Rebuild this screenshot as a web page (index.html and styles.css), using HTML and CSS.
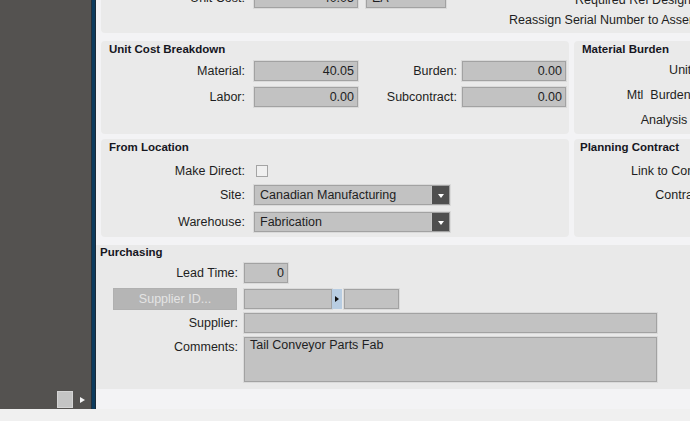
FILE: index.html
```html
<!DOCTYPE html>
<html>
<head>
<meta charset="utf-8">
<link rel="stylesheet" href="styles.css">
</head>
<body>
<div class="app">
  <aside class="sidebar">
    <div class="side-tools">
      <span class="side-box"></span>
      <span class="side-arrow"></span>
    </div>
  </aside>
  <div class="divider"></div>
  <main class="main">
    <section class="panel top-panel">
      <div class="row">
        <span class="lbl w-top">Unit Cost:</span>
        <div class="input num w104">40.05</div>
        <div class="input w80 ea">EA</div>
      </div>
      <div class="flags">
        <div class="flag flag-1">Required Ref Designators</div>
        <div class="flag">Reassign Serial Number to Assembly</div>
      </div>
    </section>

    <div class="grid">
      <section class="panel ucb">
        <h3 class="title">Unit Cost Breakdown</h3>
        <div class="row r1">
          <span class="lbl w144">Material:</span>
          <div class="input num w104">40.05</div>
          <span class="lbl w99">Burden:</span>
          <div class="input num w104">0.00</div>
        </div>
        <div class="row r2">
          <span class="lbl w144">Labor:</span>
          <div class="input num w104">0.00</div>
          <span class="lbl w99">Subcontract:</span>
          <div class="input num w104">0.00</div>
        </div>
      </section>

      <section class="panel mb">
        <h3 class="title">Material Burden</h3>
        <div class="side-labels">
          <div class="slbl">Unit Cost:</div>
          <div class="slbl">Mtl&nbsp; Burden Rate:</div>
          <div class="slbl">Analysis Code:</div>
        </div>
      </section>

      <section class="panel fl">
        <h3 class="title">From Location</h3>
        <div class="row fr1">
          <span class="lbl w144">Make Direct:</span>
          <span class="check"></span>
        </div>
        <div class="row fr2">
          <span class="lbl w144">Site:</span>
          <div class="combo"><span class="combo-text">Canadian Manufacturing</span><span class="combo-btn"><i class="tri-down"></i></span></div>
        </div>
        <div class="row fr3">
          <span class="lbl w144">Warehouse:</span>
          <div class="combo"><span class="combo-text">Fabrication</span><span class="combo-btn"><i class="tri-down"></i></span></div>
        </div>
      </section>

      <section class="panel pc">
        <h3 class="title">Planning Contract</h3>
        <div class="pc-labels">
          <div class="slbl">Link to Contract:</div>
          <div class="slbl">Contract ID:</div>
        </div>
      </section>
    </div>

    <section class="purchasing">
      <h3 class="title">Purchasing</h3>
      <div class="row pr1">
        <span class="lbl w142">Lead Time:</span>
        <div class="input num w44">0</div>
      </div>
      <div class="row pr2">
        <div class="btn-cell"><button class="btn-disabled">Supplier ID...</button></div>
        <div class="input w88"></div>
        <span class="blue-btn"><i class="tri-right"></i></span>
        <div class="input w55"></div>
      </div>
      <div class="row pr3">
        <span class="lbl w142">Supplier:</span>
        <div class="input w413"></div>
      </div>
      <div class="row pr4">
        <span class="lbl w142 top">Comments:</span>
        <div class="input w413 memo">Tail Conveyor Parts Fab</div>
      </div>
    </section>
  </main>
</div>
<div class="statusbar"></div>
</body>
</html>
```
FILE: styles.css
```css
* { box-sizing: border-box; }
html, body {
  margin: 0;
  padding: 0;
}
body {
  width: 690px;
  height: 421px;
  overflow: hidden;
  background: #f0f0f0;
  font-family: "Liberation Sans", Arial, sans-serif;
  font-size: 12.5px;
  color: #1e1e22;
}
.app {
  display: flex;
  height: 409px;
}
.sidebar {
  width: 91px;
  flex: none;
  background: #545250;
  display: flex;
  flex-direction: column;
  justify-content: flex-end;
}
.side-tools {
  display: flex;
  align-items: center;
  justify-content: flex-end;
  padding: 0 6px 1px 0;
  gap: 7px;
}
.side-box {
  width: 16px;
  height: 17px;
  background: #c4c4c4;
  border: 1px solid #d4d4d4;
}
.side-arrow {
  width: 0;
  height: 0;
  border-top: 3.5px solid transparent;
  border-bottom: 3.5px solid transparent;
  border-left: 5px solid #f4f4f4;
}
.divider {
  width: 5px;
  flex: none;
  background: #0c3b5e;
  border-left: 1px solid #23303c;
  border-right: 1px solid #1a2a38;
}
.main {
  flex: 1;
  background: #f3f3f5;
  overflow: hidden;
  display: flex;
  flex-direction: column;
}
.panel {
  background: #eaeaea;
  border-radius: 4px;
}
.title {
  margin: 0;
  padding-top: 1px;
  font-size: 11.5px;
  font-weight: bold;
  line-height: 14px;
  color: #16161e;
}
.row {
  display: flex;
  align-items: center;
}
.lbl {
  text-align: right;
  white-space: nowrap;
  flex: none;
}
.w144 { width: 144px; margin-right: 9px; }
.w99 { width: 99px; margin-right: 5px; }
.w142 { width: 142px; margin-right: 6px; }
.w-top { width: 144px; margin-right: 9px; }
.input {
  height: 20px;
  background: #c2c2c2;
  border: 1px solid #a2a2a2;
  box-shadow: 0 0 0 1px #dadada;
  padding: 0 5px;
  line-height: 18px;
  white-space: nowrap;
  flex: none;
  color: #1e1e22;
}
.num { text-align: right; padding-right: 3px; }
.w104 { width: 104px; }
.w80 { width: 80px; }
.w44 { width: 44px; }
.w88 { width: 88px; }
.w55 { width: 55px; }
.w413 { width: 413px; }

/* top panel */
.top-panel {
  margin: -14px 0 8px 5px;
  height: 47px;
  width: 700px;
  display: flex;
  align-items: flex-start;
  padding-top: 2px;
}
.top-panel .row { flex: none; }
.ea { margin-left: 8px; text-align: left; }
.flags {
  margin: 2px 0 0 63px;
  white-space: nowrap;
}
.flag { line-height: 20px; }
.flag-1 { padding-left: 66px; }

/* grid of panels */
.grid {
  display: grid;
  grid-template-columns: 468px 220px;
  grid-template-rows: 93px 98px;
  gap: 5px;
  padding-left: 5px;
}
.ucb .title, .fl .title { padding-left: 8px; }
.ucb .r1 { margin-top: 5px; }
.ucb .r2 { margin-top: 6px; }
.mb .title { padding-left: 8px; }
.side-labels { margin-top: 2px; width: 150px; }
.slbl {
  text-align: right;
  white-space: nowrap;
  line-height: 25px;
}
.pc .title { padding-left: 6px; }
.pc-labels { margin-top: 5px; width: 148px; }
.pc-labels .slbl { line-height: 24px; }

.fr1 { margin-top: 6px; height: 21px; }
.fr2 { margin-top: 4px; }
.fr3 { margin-top: 7px; }
.check {
  width: 12px;
  height: 12px;
  margin: 0 0 0 2px;
  background: #f0f0f0;
  border: 1px solid #a4a4a4;
}
.combo {
  width: 196px;
  height: 20px;
  display: flex;
  background: #c2c2c2;
  border: 1px solid #a2a2a2;
  box-shadow: 0 0 0 1px #dadada;
}
.combo-text {
  flex: 1;
  padding-left: 5px;
  line-height: 18px;
}
.combo-btn {
  width: 18px;
  background: #4f4f4f;
  border-left: 1px solid #c8c8c8;
  display: flex;
  align-items: center;
  justify-content: center;
}
.tri-down {
  width: 0;
  height: 0;
  border-left: 3.5px solid transparent;
  border-right: 3.5px solid transparent;
  border-top: 4px solid #ffffff;
  margin-top: 1px;
}

/* purchasing */
.purchasing {
  margin-top: 8px;
  height: 144px;
  background: #e9e9e9;
}
.purchasing .title { padding: 0 0 0 4px; }
.pr1 { margin-top: 4px; }
.pr2 { margin-top: 5px; height: 22px; }
.pr3 { margin-top: 3px; }
.pr4 { margin-top: 4px; align-items: flex-start; }
.btn-cell {
  width: 142px;
  margin-right: 6px;
  display: flex;
  justify-content: flex-end;
  flex: none;
}
.btn-disabled {
  width: 124px;
  height: 22px;
  margin-right: 1px;
  background: #b5b5b5;
  border: 1px solid #b0b0b0;
  color: #e4e4e4;
  font-family: "Liberation Sans", Arial, sans-serif;
  font-size: 12.5px;
  padding: 0;
}
.blue-btn {
  width: 10px;
  height: 20px;
  background: #b8cde2;
  display: flex;
  align-items: center;
  justify-content: center;
  margin-right: 2px;
  flex: none;
}
.tri-right {
  width: 0;
  height: 0;
  border-top: 3.5px solid transparent;
  border-bottom: 3.5px solid transparent;
  border-left: 4px solid #111;
}
.lbl.top { line-height: 18px; padding-top: 1px; }
.memo {
  height: 45px;
  line-height: 15px;
  padding-top: 0;
}

.statusbar {
  height: 12px;
  background: #f0f0f0;
}
```
